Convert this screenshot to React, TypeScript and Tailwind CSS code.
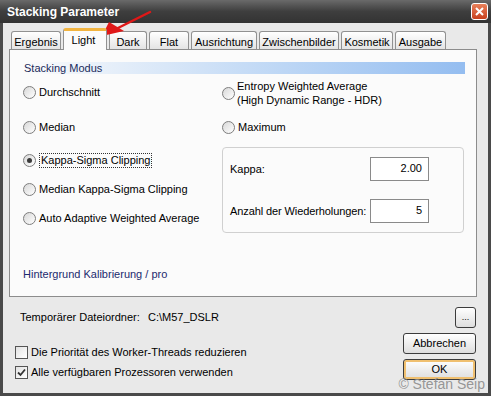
import type { ReactNode } from 'react'

const TABS = ['Ergebnis', 'Light', 'Dark', 'Flat', 'Ausrichtung', 'Zwischenbilder', 'Kosmetik', 'Ausgabe']
const TAB_W = [50, 44, 38, 40, 66, 80, 52, 51]

function Radio({ checked, children }: { checked?: boolean; children: ReactNode }) {
  return (
    <div className="flex items-center gap-[3px] h-[16px]">
      <span className="w-[13px] h-[13px] rounded-full border border-[#7d7d7d] bg-gradient-to-br from-[#d8d8d8] to-white flex items-center justify-center shrink-0">
        {checked && <span className="w-[5px] h-[5px] rounded-full bg-[#3a3a3a]" />}
      </span>
      {children}
    </div>
  )
}

function Check({ checked, label }: { checked?: boolean; label: string }) {
  return (
    <div className="flex items-center gap-[3px] h-[14px] leading-[14px]">
      <span className="w-[13px] h-[13px] border border-[#555] bg-gradient-to-br from-[#e2e2e2] to-white flex items-center justify-center shrink-0">
        {checked && (
          <svg width="9" height="9" viewBox="0 0 9 9">
            <path d="M1 4.5 L3.5 7 L8 1.5" stroke="#333" strokeWidth="1.8" fill="none" />
          </svg>
        )}
      </span>
      <span>{label}</span>
    </div>
  )
}

function Btn({ children, def, className = '' }: { children: ReactNode; def?: boolean; className?: string }) {
  return (
    <div
      className={`h-[21px] rounded-[3px] border border-[#3c3c3c] bg-gradient-to-b from-white to-[#dedede] flex items-center justify-center ${
        def ? 'shadow-[inset_0_0_0_2px_#f0c070]' : ''
      } ${className}`}
    >
      {children}
    </div>
  )
}

export default function App() {
  return (
    <div
      className="w-[491px] h-[396px] bg-[#4a4a4a] flex flex-col text-[11px] text-black overflow-hidden relative"
      style={{ fontFamily: 'Tahoma, "Liberation Sans", Arial, sans-serif' }}
    >
      {/* title bar */}
      <div className="h-[23px] shrink-0 bg-gradient-to-b from-[#6a6a6a] via-[#3e3e3e] to-[#333] flex items-center justify-between pl-[7px] pr-[3px]">
        <span className="text-white font-bold text-[12px]">Stacking Parameter</span>
        <span className="w-[17px] h-[17px] rounded-[3px] border border-white bg-gradient-to-b from-[#e8805a] to-[#c8401c] flex items-center justify-center">
          <svg width="9" height="9" viewBox="0 0 9 9">
            <path d="M1 1 L8 8 M8 1 L1 8" stroke="white" strokeWidth="2" />
          </svg>
        </span>
      </div>

      {/* body */}
      <div className="flex-1 mx-[3px] mb-[3px] bg-[#e9e9e9] flex flex-col">
        {/* tabs */}
        <div className="h-[26px] flex items-end pl-[8px] gap-[2px] shrink-0">
          {TABS.map((t, i) =>
            t === 'Light' ? (
              <div
                key={t}
                style={{ width: TAB_W[i] }}
                className="h-[22px] -mb-px z-10 bg-[#fbfbfb] border-x border-[#919191] border-t-[3px] border-t-[#f2b440] rounded-t-[3px] text-center pt-[1px] pr-[3px]"
              >
                {t}
              </div>
            ) : (
              <div
                key={t}
                style={{ width: TAB_W[i] }}
                className="h-[18px] bg-gradient-to-b from-white to-[#e4e4e4] border border-b-0 border-[#919191] rounded-t-[3px] text-center pt-[2px] whitespace-nowrap"
              >
                {t}
              </div>
            ),
          )}
        </div>

        {/* panel */}
        <div className="ml-[6px] w-[468px] h-[248px] shrink-0 bg-[#fbfbfb] border border-[#8c8c8c] pl-[13px] pt-[12px] flex flex-col">
          <div className="w-[442px] h-[12px] bg-gradient-to-r from-[#fbfbfb] via-[#c6dcf6] to-[#94bdf0] text-[#1a2a5a] leading-[12px] pl-[1px]">
            Stacking Modus
          </div>
          <div className="flex">
            <div className="w-[199px] flex flex-col pt-[10px]">
              <Radio>Durchschnitt</Radio>
              <div className="mt-[19px]">
                <Radio>Median</Radio>
              </div>
              <div className="mt-[17px]">
                <Radio checked>
                  <span className="border border-dotted border-[#333] px-[1px] leading-[13px]">Kappa-Sigma Clipping</span>
                </Radio>
              </div>
              <div className="mt-[13px]">
                <Radio>Median Kappa-Sigma Clipping</Radio>
              </div>
              <div className="mt-[13px]">
                <Radio>Auto Adaptive Weighted Average</Radio>
              </div>
              <div className="mt-[40px] text-[#1c2a6e]">Hintergrund Kalibrierung / pro</div>
            </div>
            <div className="flex flex-col pt-[5px]">
              <div className="flex items-center gap-[2px]">
                <span className="w-[13px] h-[13px] rounded-full border border-[#7d7d7d] bg-gradient-to-br from-[#d8d8d8] to-white shrink-0" />
                <div className="leading-[14px]">
                  Entropy Weighted Average
                  <br />
                  (High Dynamic Range - HDR)
                </div>
              </div>
              <div className="mt-[12px]">
                <Radio>Maximum</Radio>
              </div>
              <div className="mt-[12px] w-[242px] h-[86px] border border-[#d0d0d0] rounded-[4px] pl-[7px] pr-[34px] flex flex-col justify-center gap-[18px]">
                <div className="flex items-center justify-between">
                  <span>Kappa:</span>
                  <span className="w-[59px] h-[24px] border border-[#8a8a8a] bg-white text-right pr-[6px] leading-[20px]">2.00</span>
                </div>
                <div className="flex items-center justify-between">
                  <span className="tracking-[-0.1px]">Anzahl der Wiederholungen:</span>
                  <span className="w-[59px] h-[24px] border border-[#8a8a8a] bg-white text-right pr-[6px] leading-[20px]">5</span>
                </div>
              </div>
            </div>
          </div>
        </div>

        {/* bottom */}
        <div className="flex-1 flex pl-[12px] pr-[12px] pt-[10px]">
          <div className="flex-1 flex flex-col">
            <div className="flex h-[21px] items-center pl-[5px]">
              <span className="w-[128px]">Temporärer Dateiordner:</span>
              <span>C:\M57_DSLR</span>
            </div>
            <div className="mt-[17px] flex flex-col gap-[6px]">
              <Check label="Die Priorität des Worker-Threads reduzieren" />
              <Check checked label="Alle verfügbaren Prozessoren verwenden" />
            </div>
          </div>
          <div className="w-[73px] flex flex-col items-end">
            <Btn className="w-[21px] text-[9px]">...</Btn>
            <Btn className="w-[73px] mt-[5px]">Abbrechen</Btn>
            <Btn def className="w-[73px] mt-[5px]">OK</Btn>
          </div>
        </div>
      </div>

      {/* watermark */}
      <div className="absolute right-[6px] bottom-[1px] text-[14px] text-[#8c8c8c]/90 font-['Liberation_Sans',sans-serif]">
        © Stefan Seip
      </div>

      {/* red arrow */}
      <svg className="absolute left-0 top-0 pointer-events-none" width="491" height="60">
        <path d="M150 12 L116 29" stroke="#e01818" strokeWidth="2.5" strokeLinecap="round" />
        <path d="M102 36 L109 22 L124 31 Z" fill="#e01818" />
      </svg>
    </div>
  )
}
